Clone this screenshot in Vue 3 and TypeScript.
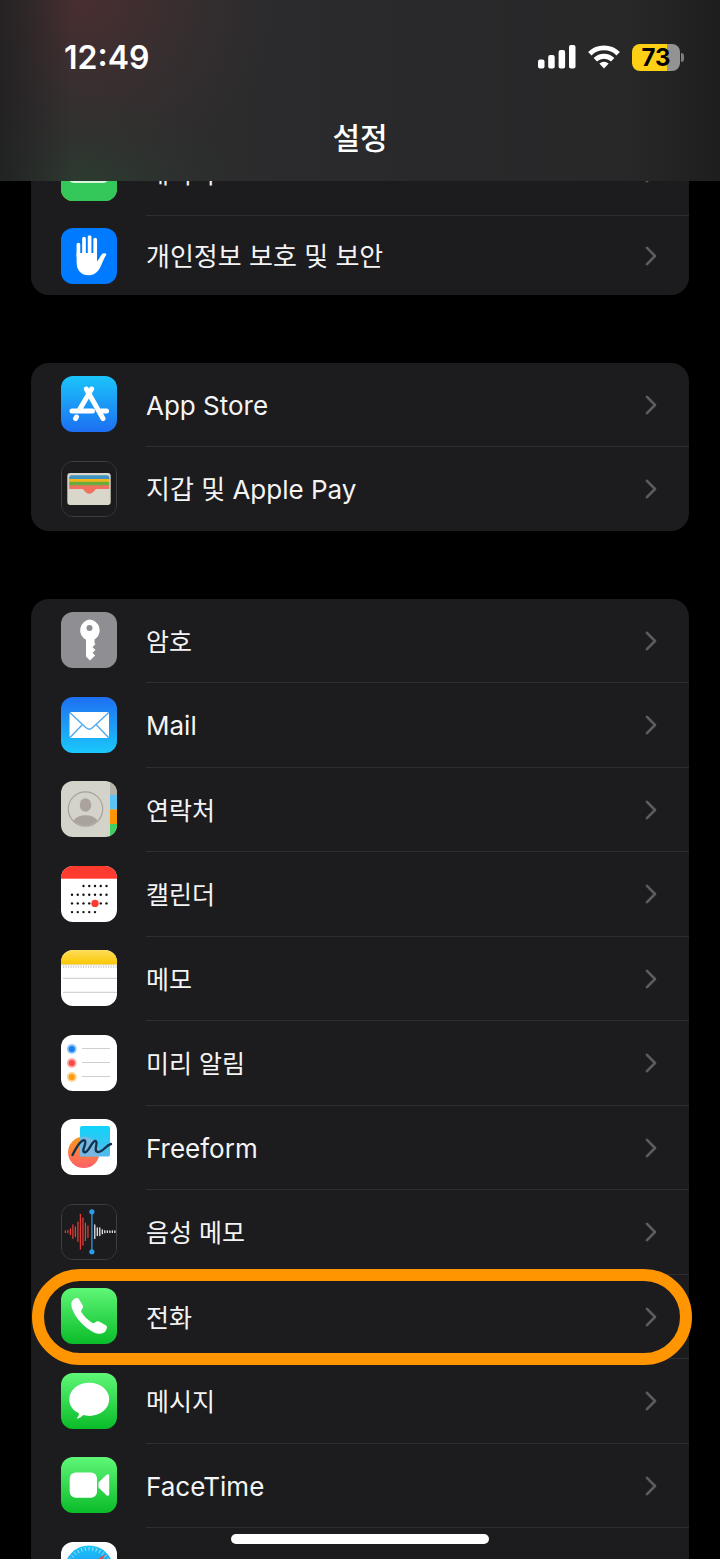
<script setup lang="ts">
interface Item {
  icon: string
  label: string
  marked?: boolean
}

const groups: { name: string; items: Item[] }[] = [
  {
    name: 'system',
    items: [
      { icon: 'battery', label: '배터리' },
      { icon: 'privacy', label: '개인정보 보호 및 보안' },
    ],
  },
  {
    name: 'store',
    items: [
      { icon: 'appstore', label: 'App Store' },
      { icon: 'wallet', label: '지갑 및 Apple Pay' },
    ],
  },
  {
    name: 'apps',
    items: [
      { icon: 'passwords', label: '암호' },
      { icon: 'mail', label: 'Mail' },
      { icon: 'contacts', label: '연락처' },
      { icon: 'calendar', label: '캘린더' },
      { icon: 'notes', label: '메모' },
      { icon: 'reminders', label: '미리 알림' },
      { icon: 'freeform', label: 'Freeform' },
      { icon: 'voice', label: '음성 메모' },
      { icon: 'phone', label: '전화', marked: true },
      { icon: 'messages', label: '메시지' },
      { icon: 'facetime', label: 'FaceTime' },
      { icon: 'safari', label: 'Safari' },
    ],
  },
]

const isHangul = (label: string) => label.length < 6 && /^[가-힣 ]+$/.test(label)

// Calendar dots: first and last filled column of each week
const weeks = [[2, 6], [0, 6], [0, 6], [0, 4]]
const days = weeks.flatMap(([from, to], row) =>
  Array.from({ length: to - from + 1 }, (_, i) => ({
    x: 11 + (from + i) * 5.75,
    y: 20 + row * 8.7,
  })),
)

// Half-heights of the recorded (red) and upcoming (white) waveform bars
const redBars = [0.8, 1, 3, 7, 5, 10, 18, 14, 9, 6].map((h, i) => ({ x: 3.5 + i * 2.6, h }))
const whiteBars = [7, 4, 4, 2, 1, 0.8, 0.8, 0.8, 0.8].map((h, i) => ({ x: 34 + i * 2.6, h }))
const ticks = Array.from({ length: 36 }, (_, i) => i * 10)
</script>

<template>
  <div class="screen">
    <svg class="defs" aria-hidden="true">
      <defs>
        <linearGradient id="g-store" x2="0" y2="1"><stop stop-color="#1ac4fb" /><stop offset="1" stop-color="#1d6ff2" /></linearGradient>
        <linearGradient id="g-mail" x2="0" y2="1"><stop stop-color="#1e6ff2" /><stop offset="1" stop-color="#1ac8fb" /></linearGradient>
        <linearGradient id="g-green" x2="0" y2="1"><stop stop-color="#5ff777" /><stop offset="1" stop-color="#0abc29" /></linearGradient>
        <linearGradient id="g-notes" x2="0" y2="1"><stop stop-color="#fddd5c" /><stop offset="1" stop-color="#fcc800" /></linearGradient>
        <linearGradient id="g-square" x2="0" y2="1"><stop stop-color="#0fd4fa" /><stop offset="1" stop-color="#53b9ec" /></linearGradient>
        <linearGradient id="g-circle" x2="0" y2="1"><stop stop-color="#fc9a1c" /><stop offset="1" stop-color="#ff5f68" /></linearGradient>
        <linearGradient id="g-safari" x2="0" y2="1"><stop stop-color="#1cc5f8" /><stop offset="1" stop-color="#1d70f0" /></linearGradient>
      </defs>
    </svg>

    <header class="header">
      <div class="status">
        <time class="clock">12:49</time>
        <div class="indicators">
          <svg width="38" height="24" viewBox="0 0 38 24" fill="#fff" aria-label="신호">
            <rect x="0" y="14.5" width="6.5" height="9" rx="2" />
            <rect x="10.2" y="10" width="6.5" height="13.5" rx="2" />
            <rect x="20.6" y="5" width="6.5" height="18.500" rx="2" />
            <rect x="31" y="0" width="6.5" height="23.500" rx="2" />
          </svg>
          <svg width="32" height="24" viewBox="0 0 32 24" fill="none" stroke="#fff" stroke-width="4.8" aria-label="Wi-Fi">
            <path d="M1.800 8.700A20.300 20.300 0 0 1 30.200 8.700" />
            <path d="M7.300 14.800A12.400 12.400 0 0 1 24.700 14.800" />
            <path d="M16 23.400L11.300 18.600Q16 15 20.700 18.600Z" fill="#fff" stroke="none" />
          </svg>
          <div class="battery"><span class="level">73</span></div>
        </div>
      </div>
      <h1 class="title">설정</h1>
    </header>

    <main class="content">
      <ul v-for="group in groups" :key="group.name" class="group" :class="group.name">
        <li v-for="item in group.items" :key="item.icon" class="item">
          <a class="row" href="#">
            <span class="tile">
              <svg class="icon" :class="item.icon" viewBox="0 0 56 56" aria-hidden="true">
                <g v-if="item.icon === 'battery'">
                  <rect width="56" height="56" fill="#34c759" />
                  <rect x="8.500" y="18" width="38" height="19" rx="4" fill="none" stroke="#d5f5dc" stroke-width="2" />
                  <rect x="11" y="20" width="33" height="15" rx="3" fill="#fff" />
                </g>
                <g v-else-if="item.icon === 'privacy'">
                  <rect width="56" height="56" fill="#007aff" />
                  <path d="M17.400 28V16.500M23 28V10.500M28.600 28V9M34.200 28V11.500" stroke="#fff" stroke-width="3.700" stroke-linecap="round" />
                  <path d="M15.600 25H36V33.500C38 31.500 39 28.500 40.500 26.800C42 25 44.500 25 45.500 26.200C44 28.500 42.500 32 40.500 36.500C38 43 34 47.300 28 47.300C20 47.300 15.600 42.500 15.600 34Z" fill="#fff" />
                </g>
                <g v-else-if="item.icon === 'appstore'" fill="none" stroke="#fff" stroke-width="5" stroke-linecap="round">
                  <rect width="56" height="56" fill="url(#g-store)" stroke="none" />
                  <path d="M30.600 13L18.300 34M15.500 41L14.600 42.600M25.300 13L42 42.600M11 35H31.500M40 35H45.500" />
                </g>
                <g v-else-if="item.icon === 'wallet'">
                  <rect width="56" height="56" fill="#1c1c1e" />
                  <rect x="5.500" y="11.500" width="45" height="33" rx="3" fill="#d9d7cb" />
                  <path d="M7.500 19V16Q7.500 13.700 9.800 13.700H46.700Q49 13.700 49 16V19Z" fill="#3f94c0" />
                  <path d="M7.500 17.500H49V22H7.500Z" fill="#f8b416" />
                  <path d="M7.500 20.600H49V25H7.500Z" fill="#69ad3c" />
                  <path d="M7.500 24H49V28H36.500C33.500 28 32.500 33 28.300 33C24 33 23.500 28 20.500 28H7.500Z" fill="#f1715f" />
                </g>
                <g v-else-if="item.icon === 'passwords'">
                  <rect width="56" height="56" fill="#8e8e93" />
                  <path d="M28.500 7.500A10.800 10.800 0 0 1 33.500 27.500V31L34.500 32L31.500 35.200L34.500 38L31.500 40.700L34.200 43.400L29 48.500L25 44.500V27.800A10.800 10.800 0 0 1 28.500 7.500Z" fill="#fff" />
                  <circle cx="28.500" cy="16" r="3" fill="#8e8e93" />
                </g>
                <g v-else-if="item.icon === 'mail'" fill="none" stroke="#52a9ea" stroke-width="1.400">
                  <rect width="56" height="56" fill="url(#g-mail)" stroke="none" />
                  <rect x="8.500" y="15" width="39.500" height="26" rx="2" fill="#fff" stroke="none" />
                  <path d="M9 15.800L24.500 30.300Q28.300 34 32 30.300L47.500 15.800M9 40.500L21 28M47.500 40.500L35.500 28" />
                </g>
                <g v-else-if="item.icon === 'contacts'">
                  <rect width="56" height="56" fill="#d4d3c9" />
                  <rect x="49" width="7" height="14" fill="#b5b3aa" />
                  <rect x="49" y="14" width="7" height="14.500" fill="#5bc4f5" />
                  <rect x="49" y="28.500" width="7" height="14.500" fill="#fb9501" />
                  <rect x="49" y="43" width="7" height="13" fill="#3fcf62" />
                  <circle cx="24.500" cy="28" r="17.200" fill="none" stroke="#a9a39b" stroke-width="1.200" />
                  <ellipse cx="24.500" cy="24" rx="5.800" ry="6.800" fill="#a9a39b" />
                  <path d="M12.500 39.500Q16.500 34.300 24.500 34.300T36.500 39.500Q31.500 44.500 24.500 44.500T12.500 39.500Z" fill="#a9a39b" />
                </g>
                <g v-else-if="item.icon === 'calendar'">
                  <rect width="56" height="56" fill="#fff" />
                  <rect width="56" height="12.700" fill="#ff3b30" />
                  <circle v-for="day in days" :key="`${day.x}-${day.y}`" :cx="day.x" :cy="day.y" r="1.200" fill="#111" />
                  <circle cx="34" cy="37.400" r="3.700" fill="#ff3b30" />
                </g>
                <g v-else-if="item.icon === 'notes'">
                  <rect width="56" height="56" fill="#fff" />
                  <rect width="56" height="14.500" fill="url(#g-notes)" />
                  <path d="M0 14.900H56" stroke="#d5cba8" stroke-width="0.800" />
                  <path d="M2 17H56" stroke="#aaa" stroke-width="1.200" stroke-dasharray="1.200 1.300" />
                  <path d="M2 28.300H56M2 42.300H56" stroke="#c4c4c6" stroke-width="0.900" />
                </g>
                <g v-else-if="item.icon === 'reminders'">
                  <rect width="56" height="56" fill="#fff" />
                  <path d="M21 13.500H49M21 27.500H49M21 41.500H49" stroke="#cfcfd1" />
                  <g v-for="(color, i) in ['#1681ee', '#f74b45', '#fb9d13']" :key="color" :fill="color">
                    <circle cx="10.800" :cy="14 + i * 14" r="4.900" fill-opacity="0.450" />
                    <circle cx="10.800" :cy="14 + i * 14" r="3.100" />
                  </g>
                </g>
                <g v-else-if="item.icon === 'freeform'">
                  <rect width="56" height="56" fill="#fff" />
                  <circle cx="22.800" cy="33.300" r="15.800" fill="url(#g-circle)" />
                  <rect x="19" y="7" width="30" height="30.500" rx="2" fill="url(#g-square)" />
                  <path d="M19 17.900A15.800 15.800 0 0 1 38 37.500H19Z" fill="#83b5df" opacity="0.800" />
                  <path d="M11.500 36C15 29 20 20.500 23.500 21.300C27 22.500 19.500 32.500 23.500 33.300C28 33.800 31 21 34.500 22C38 23 31.500 32.500 37 33C42 33.300 44.500 26.500 50 25" fill="none" stroke="#12344d" stroke-width="2.400" stroke-linecap="round" />
                </g>
                <g v-else-if="item.icon === 'voice'" stroke-width="1.300" stroke-linecap="round">
                  <rect width="56" height="56" fill="#1c1c1e" />
                  <path v-for="bar in redBars" :key="bar.x" :d="`M${bar.x} ${27.7 - bar.h}V${27.7 + bar.h}`" stroke="#e43d35" />
                  <path v-for="bar in whiteBars" :key="bar.x" :d="`M${bar.x} ${27.7 - bar.h}V${27.7 + bar.h}`" stroke="#eee" />
                  <path d="M31 7V48.500" stroke="#2b9ce8" />
                  <circle cx="31" cy="7" r="2.700" fill="#2b9ce8" />
                  <circle cx="31" cy="48.500" r="2.700" fill="#2b9ce8" />
                </g>
                <g v-else-if="item.icon === 'phone'">
                  <rect width="56" height="56" fill="url(#g-green)" />
                  <path d="M10.500 14.500C11 12 13.500 10.500 15.500 10C16.700 9.700 17.500 10.100 18 11.200L21.600 17.200C22.200 18.300 22.200 19.300 21.600 20.200L20.400 22.200C20 23 20.200 23.800 20.800 24.800C23.200 28.500 27 32.200 31 34.700C32 35.300 32.800 35.300 33.700 34.700L35.500 33.600C36.500 33 37.500 33 38.600 33.700L44.700 37.300C45.800 38 46.200 38.800 45.900 39.900C45.200 42.500 43.800 44.500 41.500 45.300C38.500 46.300 35 45.700 32 44C23.500 39.300 16 31.500 12.300 23.500C10.800 20.300 9.900 17.500 10.500 14.500Z" fill="#fff" />
                </g>
                <g v-else-if="item.icon === 'messages'">
                  <rect width="56" height="56" fill="url(#g-green)" />
                  <path d="M28.200 9.800C39.500 9.800 48.200 17 48.200 26.300S39.500 42.900 28.200 42.900C26 42.900 24 42.600 22.300 42.100C20.500 44 18.300 45.500 15.500 45.700C17.200 44 18 42.300 17.900 40.300C11.800 37.500 8.300 32.500 8.300 26.300C8.300 17 17 9.800 28.200 9.800Z" fill="#fff" />
                </g>
                <g v-else-if="item.icon === 'facetime'" fill="#fff">
                  <rect width="56" height="56" fill="url(#g-green)" />
                  <rect x="8.700" y="15.500" width="27.300" height="25.300" rx="6" />
                  <path d="M37.500 25.500L45.500 17.700C46.700 16.700 48.200 17.200 48.200 18.700V37.300C48.200 38.800 46.700 39.300 45.500 38.300L37.500 30.500Z" />
                </g>
                <g v-else>
                  <rect width="56" height="56" fill="#fff" />
                  <circle cx="28" cy="28" r="24.500" fill="url(#g-safari)" />
                  <path v-for="angle in ticks" :key="angle" d="M28 5V8.500" stroke="#c6effd" stroke-width="0.700" :transform="`rotate(${angle} 28 28)`" />
                  <path d="M45 12L31 31L25 25Z" fill="#f3483f" />
                  <path d="M11 44L31 31L25 25Z" fill="#fff" />
                </g>
              </svg>
            </span>
            <span class="body">
              <span class="label" :class="{ hangul: isHangul(item.label) }">{{ item.label }}</span>
              <svg class="chevron" width="12" height="20" viewBox="0 0 12 20" aria-hidden="true">
                <path d="M2 1.800L10 10L2 18.200" fill="none" stroke="#5b5b60" stroke-width="2.600" stroke-linecap="round" stroke-linejoin="round" />
              </svg>
            </span>
          </a>
          <span v-if="item.marked" class="ring"></span>
        </li>
      </ul>
    </main>

    <div class="home"></div>
  </div>
</template>

<style>
body {
  margin: 0;
  background: #000;
}
</style>

<style scoped>
.screen {
  position: relative;
  height: 100vh;
  overflow: hidden;
  background: #000;
  color: #f4f4f5;
  font-family: Inter, 'Noto Sans CJK KR', sans-serif;
}

.defs {
  position: absolute;
  width: 0;
  height: 0;
}

/* Navigation bar, floating over the scrolled list */
.header {
  position: absolute;
  inset: 0 0 auto;
  z-index: 2;
  box-sizing: border-box;
  padding-top: 38px;
  padding-bottom: 21px;
  background:
    linear-gradient(90deg, rgba(28, 28, 29, 0.7), transparent 10%, transparent 88%, rgba(26, 26, 27, 0.7)),
    radial-gradient(ellipse 150px 90px at 85px 185px, rgba(44, 64, 48, 0.75), rgba(44, 60, 48, 0.3) 50%, transparent),
    radial-gradient(ellipse 190px 180px at 85px 0, rgba(78, 46, 48, 0.85), rgba(70, 48, 49, 0.4) 50%, transparent),
    linear-gradient(90deg, #2f2f30, #29292b 60%, #272728);
}

.status {
  display: flex;
  align-items: center;
  justify-content: space-between;
  height: 38px;
  padding: 0 40px 0 64px;
}

.clock {
  font-size: 32px;
  font-weight: 600;
  color: #fff;
}

.indicators {
  display: flex;
  align-items: center;
  gap: 12px;
}

.battery {
  position: relative;
  width: 48px;
  height: 27px;
  border-radius: 8px;
  background: linear-gradient(90deg, #fdd016 73%, #939393 73%);
  color: #000;
  text-align: center;
}

.battery::after {
  content: '';
  position: absolute;
  top: 9px;
  right: -4px;
  width: 3px;
  height: 9px;
  border-radius: 0 4px 4px 0;
  background: #7d7d7e;
}

.level {
  display: block;
  font-size: 24px;
  font-weight: 700;
  line-height: 28px;
}

.title {
  margin: 40px 0 0;
  font-size: 30px;
  font-weight: 500;
  line-height: 44px;
  text-align: center;
  color: #fff;
}

.content {
  display: flex;
  flex-direction: column;
  gap: 68px;
  box-sizing: border-box;
  height: 100%;
  padding: 131px 31px 0;
  overflow: hidden;
}

.group {
  flex: none;
  margin: 0;
  padding: 0;
  border-radius: 18px;
  background: #1c1c1e;
  list-style: none;
}

.item {
  position: relative;
}

.row {
  display: flex;
  gap: 29px;
  padding-left: 30px;
  color: inherit;
  text-decoration: none;
}

.tile {
  flex: none;
  padding: 13px 0 15px;
}

.item:nth-child(even) .tile {
  padding-top: 14px;
}

.item:last-child .tile {
  padding-bottom: 14px;
}

.system .item:first-child .tile {
  padding-top: 14px;
}

.system .item:last-child .tile {
  padding-top: 12px;
  padding-bottom: 11px;
}

.icon {
  display: block;
  box-sizing: border-box;
  width: 56px;
  height: 56px;
  border-radius: 12px;
}

.icon.wallet,
.icon.voice {
  border: 1px solid #3e3e41;
}

.body {
  display: flex;
  flex: 1;
  align-items: center;
  justify-content: space-between;
  padding-right: 32px;
  border-bottom: 1px solid #2e2e31;
}

.item:last-child .body {
  border-bottom: 0;
}

.label {
  padding-top: 2px;
  font-size: 26px;
  line-height: 38px;
}

.label.hangul {
  font-size: 25px;
}

.chevron {
  flex: none;
}

.ring {
  position: absolute;
  inset: -6px -3px -6px 1px;
  z-index: 1;
  border: 12px solid #ff9500;
  border-radius: 48px;
  pointer-events: none;
}

.home {
  position: absolute;
  bottom: 15px;
  left: 50%;
  z-index: 3;
  width: 258px;
  height: 10px;
  border-radius: 5px;
  background: #fff;
  transform: translateX(-50%);
}
</style>
